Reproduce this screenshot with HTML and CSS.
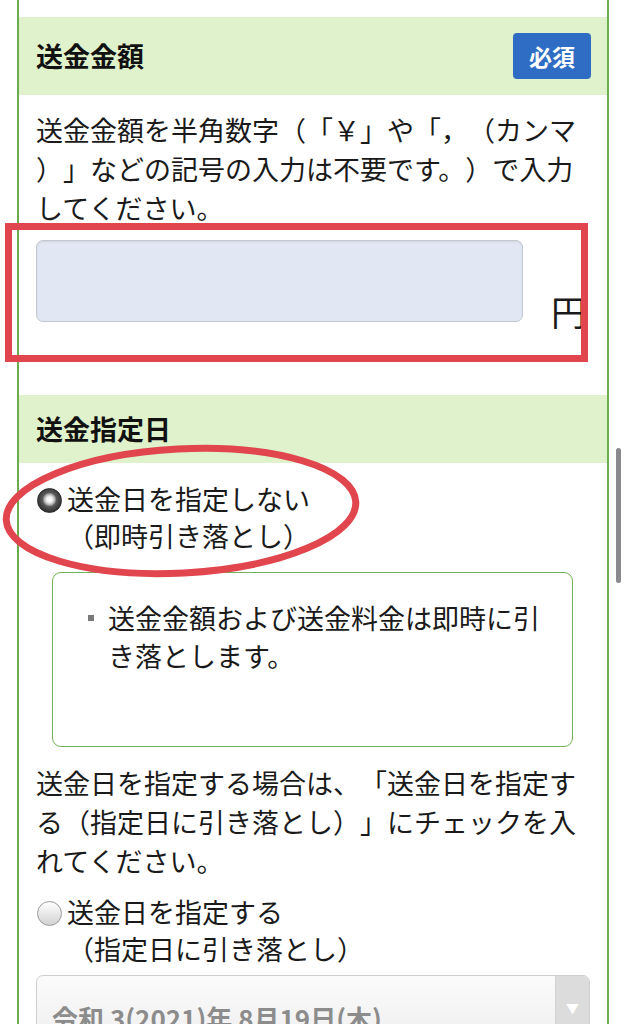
FILE: index.html
```html
<!DOCTYPE html>
<html lang="ja">
<head>
<meta charset="UTF-8">
<meta name="viewport" content="width=device-width, initial-scale=1.0">
<title>送金金額・送金指定日</title>
<link rel="stylesheet" href="styles.css">
</head>
<body>
    <div class="page">
        <div class="panel">
            <div class="top-space"></div>

            <!-- 送金金額 -->
            <div class="field">
                <div class="field-head">
                    <h2 class="field-title">送金金額</h2>
                    <span class="badge">必須</span>
                </div>
                <div class="field-body">
                    <p class="note note-amount">送金金額を半角数字（「￥」や「，（カンマ）」などの記号の入力は不要です。）で入力してください。</p>
                    <div class="amount-row">
                        <input type="text" class="amount-input">
                        <span class="yen">円</span>
                    </div>
                </div>
            </div>

            <!-- 送金指定日 -->
            <div class="field">
                <div class="field-head">
                    <h2 class="field-title">送金指定日</h2>
                </div>
                <div class="field-body">
                    <label class="radio-label radio-now">
                        <input type="radio" name="when" class="radio" checked>
                        <span>送金日を指定しない<br>（即時引き落とし）</span>
                    </label>
                    <div class="info-box">
                        <ul class="info-list">
                            <li>送金金額および送金料金は即時に引き落とします。</li>
                        </ul>
                    </div>
                    <p class="note note-date">送金日を指定する場合は、「送金日を指定する（指定日に引き落とし）」にチェックを入れてください。</p>
                    <label class="radio-label radio-later">
                        <input type="radio" name="when" class="radio">
                        <span>送金日を指定する<br>（指定日に引き落とし）</span>
                    </label>
                    <div class="select-wrap">
                        <select class="date-select">
                            <option>令和 3(2021)年 8月19日(木)</option>
                        </select>
                        <span class="select-arrow">▼</span>
                    </div>
                </div>
            </div>
        </div>

        <!-- 注釈の赤枠 -->
        <div class="mark-rect"></div>
        <svg class="mark-ellipse" width="370" height="145" viewBox="0 0 370 145">
            <ellipse cx="181" cy="71" rx="175" ry="62" transform="rotate(-3 181 71)" fill="none" stroke="#e1464e" stroke-width="7"/>
        </svg>
        <div class="scrollbar"></div>
    </div>
</body>
</html>
```
FILE: styles.css
```css
body{
    margin:0;
    background:#fff;
    font-family:"Noto Sans CJK JP", "Noto Sans", sans-serif;
    color:#1a1a1a;
    text-spacing-trim:space-all;
}
.page{
    position:relative;
    width:625px;
    height:1024px;
    overflow:hidden;
}
.panel{
    margin-left:17px;
    width:592px;
    box-sizing:border-box;
    border-left:2px solid #6aac4e;
    border-right:2px solid #6aac4e;
    min-height:1100px;
}
.top-space{
    height:17px;
}
.field-head{
    display:flex;
    align-items:center;
    justify-content:space-between;
    background:#e0f2cb;
    padding:16px 16px 16px 17px;
}
.field-title{
    margin:0;
    font-size:27px;
    line-height:36px;
    font-weight:bold;
    color:#111;
}
.badge{
    background:#2f6dc4;
    color:#fff;
    font-size:23px;
    font-weight:bold;
    height:46px;
    line-height:46px;
    padding:0 16px;
    border-radius:4px;
}
.field-body{
    padding:0 17px;
}
.note{
    margin:0;
    font-size:27px;
    line-height:39px;
}
.note-amount{
    margin-top:15px;
    line-break:anywhere;
}
.amount-row{
    display:flex;
    align-items:flex-end;
    margin-top:13px;
    margin-bottom:73px;
}
.amount-input{
    width:487px;
    height:82px;
    box-sizing:border-box;
    background:#e1e8f4;
    border:1px solid #c3c8cf;
    border-radius:7px;
    box-shadow:inset 0 1px 2px rgba(0,0,0,0.08);
    font-size:27px;
    padding:0 12px;
}
.yen{
    margin-left:28px;
    font-size:35px;
    line-height:35px;
    margin-bottom:-6px;
}
.radio-label{
    display:flex;
    align-items:flex-start;
    font-size:27px;
    line-height:37px;
}
.radio-now{
    margin-top:17px;
}
.radio-later{
    margin-top:13px;
}
.radio{
    appearance:none;
    -webkit-appearance:none;
    flex:none;
    width:25px;
    height:25px;
    margin:8px 5px 0 1px;
    border-radius:50%;
    box-sizing:border-box;
    border:1px solid #9a9a9a;
    background:linear-gradient(#ffffff, #d2d2d2);
}
.radio:checked{
    border:1px solid #2a2a2a;
    background:radial-gradient(circle at 50% 46%, #ffffff 0, #eeeeee 3px, #a8a8a8 5.5px, #5a5a5a 7px, #303030 12.5px);
}
.info-box{
    margin:18px 17px 0 16px;
    border:1.5px solid #72b058;
    border-radius:9px;
    padding:26px 16px 71px 35px;
}
.info-list{
    list-style:none;
    margin:0;
    padding:0;
}
.info-list li{
    display:flex;
    font-size:27px;
    line-height:38px;
}
.info-list li::before{
    content:"";
    flex:none;
    width:6px;
    height:6px;
    background:#7a7a7a;
    margin:16px 14px 0 0;
}
.note-date{
    margin-top:16px;
}
.select-wrap{
    display:flex;
    margin-top:8px;
    height:84px;
    box-sizing:border-box;
    border:1px solid #cfcfcf;
    border-radius:7px;
    overflow:hidden;
    background:linear-gradient(#fbfbfb, #ececec);
}
.date-select{
    appearance:none;
    -webkit-appearance:none;
    flex:1;
    border:none;
    background:transparent;
    font-family:"Noto Sans CJK JP", "Noto Sans", sans-serif;
    font-size:26px;
    font-weight:bold;
    color:#8c8c8c;
    padding:0 0 0 15px;
}
.select-arrow{
    flex:none;
    width:34px;
    background:#dcdcdc;
    border-left:1px solid #d2d2d2;
    color:#fff;
    font-size:13px;
    text-align:center;
    padding-top:22px;
    box-sizing:border-box;
}
.mark-rect{
    position:absolute;
    left:5px;
    top:223px;
    width:583px;
    height:139px;
    box-sizing:border-box;
    border:7px solid #e1464e;
}
.mark-ellipse{
    position:absolute;
    left:0;
    top:440px;
}
.scrollbar{
    position:absolute;
    left:616px;
    top:448px;
    width:5px;
    height:135px;
    border-radius:3px;
    background:#8a8a8e;
}
```
